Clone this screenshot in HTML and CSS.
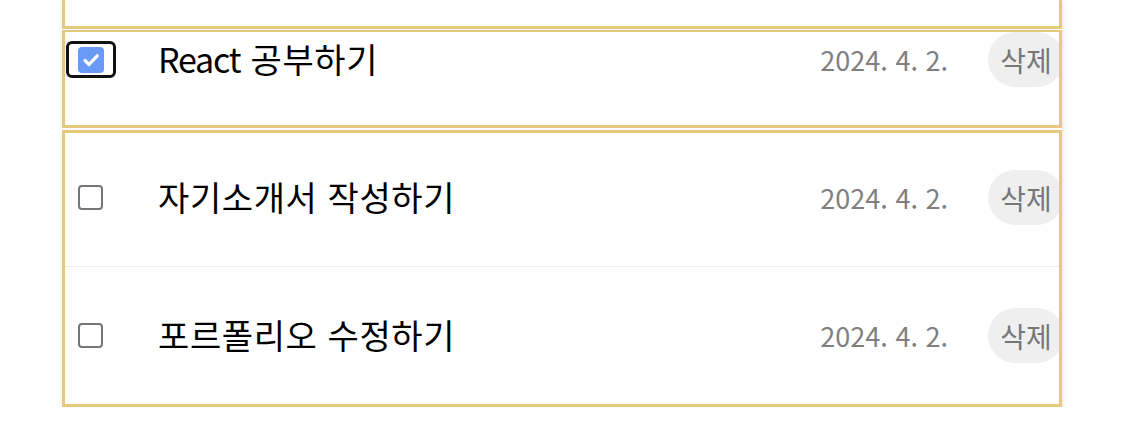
FILE: index.html
```html
<!DOCTYPE html>
<html lang="ko">
<head>
<meta charset="utf-8">
<link rel="stylesheet" href="styles.css">
</head>
<body>
<div class="list">
  <div class="box box-top"></div>
  <div class="box box-drag">
    <div class="row row-drag">
      <span class="focus-ring"><span class="check checked"><svg viewBox="0 0 20 20" width="20" height="20"><path d="M4 10.5l4 4L16.2 5.8" fill="none" stroke="#fff" stroke-width="3.2" stroke-linecap="round" stroke-linejoin="round"/></svg></span></span>
      <span class="content"><span class="latin">React</span> 공부하기</span>
      <span class="date">2024. 4. 2.</span>
      <button class="del">삭제</button>
    </div>
  </div>
  <div class="box box-rest">
    <div class="row row-second">
      <span class="check"></span>
      <span class="content">자기소개서 작성하기</span>
      <span class="date">2024. 4. 2.</span>
      <button class="del">삭제</button>
    </div>
    <div class="row row-last">
      <span class="check"></span>
      <span class="content">포르폴리오 수정하기</span>
      <span class="date">2024. 4. 2.</span>
      <button class="del">삭제</button>
    </div>
  </div>
</div>
</body>
</html>
```
FILE: styles.css
```css
html, body {
  margin: 0;
  padding: 0;
  background: #fff;
}
body {
  font-family: "Noto Sans CJK KR", "Noto Sans", sans-serif;
  color: #000;
}
.list {
  margin-left: 62px;
  width: 1000px;
  display: flex;
  flex-direction: column;
  box-shadow: 1px 1px 5px rgba(0, 0, 0, 0.12);
}
.box {
  border: 3px solid #e7c97e;
  box-sizing: border-box;
  overflow: hidden;
  background: #fff;
}
.box-top {
  height: 29px;
  border-top: none;
  margin-bottom: 1px;
}
.box-drag {
  height: 98px;
  padding-bottom: 38px;
  border-top-width: 2px;
  margin-bottom: 2px;
}
.row {
  display: flex;
  align-items: center;
  height: 55px;
  padding-left: 13px;
}
.row-drag {
  padding-top: 0;
  padding-bottom: 0;
}
.row-second {
  padding-top: 37px;
  padding-bottom: 41px;
  border-bottom: 1px solid #ececec;
}
.row-last {
  padding-top: 41px;
  padding-bottom: 41px;
}
.focus-ring {
  display: flex;
  align-items: center;
  justify-content: center;
  width: 44px;
  height: 31px;
  margin-left: -12px;
  margin-right: -13px;
  border: 3px solid #111;
  border-radius: 6px;
  background: #fff;
}
.check {
  width: 25px;
  height: 25px;
  box-sizing: border-box;
  border: 2px solid #767676;
  border-radius: 4px;
  flex: none;
  display: flex;
  align-items: center;
  justify-content: center;
  background: #fff;
}
.check.checked {
  width: 26px;
  height: 26px;
  border: none;
  background: #6a9af8;
}
.content {
  flex: 1;
  margin-left: 55px;
  font-size: 34px;
  letter-spacing: 0.6px;
  white-space: nowrap;
  margin-top: -3px;
}
.latin {
  letter-spacing: -1.2px;
}
.date {
  font-size: 27px;
  color: #7f7f7f;
  margin-right: 40px;
  white-space: nowrap;
}
.del {
  flex: none;
  width: 76px;
  height: 55px;
  margin-right: -5px;
  border: none;
  border-radius: 28px;
  background: #efefef;
  color: #777;
  font-family: "Noto Sans CJK KR", "Noto Sans", sans-serif;
  font-size: 28px;
  padding: 0;
}
```
